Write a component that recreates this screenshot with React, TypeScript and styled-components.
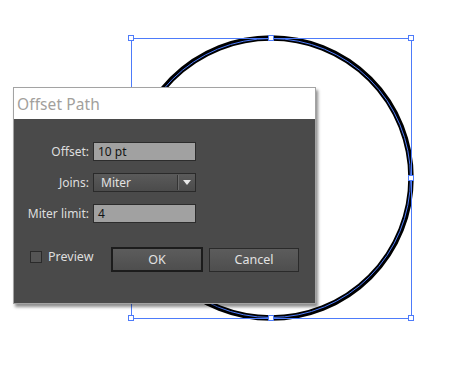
import React from "react";
import styled, { createGlobalStyle } from "styled-components";

const GlobalStyle = createGlobalStyle`
    html, body {
        margin: 0;
        padding: 0;
        background: #ffffff;
    }
    body {
        font-family: "Noto Sans", "DejaVu Sans", sans-serif;
    }
`;

const Canvas = styled.div`
    position: relative;
    width: 464px;
    height: 367px;
    overflow: hidden;
    background: #ffffff;
`;

const Artwork = styled.svg`
    position: absolute;
    left: 0;
    top: 0;
`;

const Dialog = styled.div`
    position: absolute;
    left: 13px;
    top: 87px;
    width: 301px;
    height: 215px;
    border: 1px solid #a3a3a3;
    background: #4a4a4a;
    box-shadow: 2px 3px 3px rgba(0, 0, 0, 0.45);
    display: flex;
    flex-direction: column;
`;

const TitleBar = styled.div`
    height: 31px;
    background: #ffffff;
    display: flex;
    align-items: center;
    padding-left: 3px;
    font-size: 15.5px;
    color: #a29f9c;
    letter-spacing: 0.1px;
`;

const Body = styled.div`
    flex: 1;
    padding-top: 23px;
    display: flex;
    flex-direction: column;
    gap: 24px;
`;

const Form = styled.div`
    display: grid;
    grid-template-columns: 75px 103px;
    column-gap: 4px;
    row-gap: 12px;
`;

const Label = styled.label`
    text-align: right;
    font-size: 12px;
    color: #dedede;
    line-height: 19px;
`;

const Field = styled.div`
    box-sizing: border-box;
    height: 19px;
    background: #a1a1a1;
    border: 1px solid #2c2c2c;
    padding-left: 4px;
    font-size: 12px;
    line-height: 17px;
    color: #141414;
`;

const Select = styled.div`
    box-sizing: border-box;
    height: 19px;
    border: 1px solid #2a2a2a;
    background: linear-gradient(#5a5a5a, #4b4b4b);
    display: flex;
    align-items: center;
    font-size: 12px;
    color: #e2e2e2;
`;

const SelectValue = styled.span`
    flex: 1;
    padding-left: 7px;
    line-height: 17px;
`;

const SelectArrow = styled.span`
    width: 17px;
    height: 15px;
    border-left: 1px solid #333333;
    box-shadow: inset 1px 0 0 #6a6a6a;
    display: flex;
    align-items: center;
    justify-content: center;

    &::after {
        content: "";
        border-left: 4px solid transparent;
        border-right: 4px solid transparent;
        border-top: 5px solid #e8e8e8;
    }
`;

const Actions = styled.div`
    display: flex;
    align-items: center;
    padding-left: 16px;
`;

const PreviewToggle = styled.label`
    width: 81px;
    display: flex;
    align-items: center;
    gap: 6px;
    font-size: 12.5px;
    color: #dedede;
    margin-top: -6px;
`;

const CheckBox = styled.span`
    box-sizing: border-box;
    width: 12px;
    height: 12px;
    border: 1px solid #2a2a2a;
    background: #555555;
`;

const Button = styled.button<{ $primary?: boolean }>`
    box-sizing: border-box;
    width: ${(p) => (p.$primary ? "92px" : "90px")};
    height: ${(p) => (p.$primary ? "25px" : "24px")};
    margin-right: 6px;
    border: ${(p) => (p.$primary ? "2px solid #1c1c1c" : "1px solid #2a2a2a")};
    background: linear-gradient(#5c5c5c, #4e4e4e);
    color: #e2e2e2;
    font-family: inherit;
    font-size: 12.5px;
    padding: 0;
`;

const blue = "#4d7bfa";

const handles: [number, number][] = [
    [131, 38],
    [271, 38],
    [411, 38],
    [411, 178],
    [411, 318],
    [271, 318],
    [131, 318],
    [131, 178],
];

const App: React.FC = () => {
    return (
        <Canvas>
            <GlobalStyle />
            <Artwork width={464} height={367} viewBox="0 0 464 367">
                <circle cx={271} cy={178} r={140} fill="none" stroke="#000" strokeWidth={5.5} />
                <circle cx={271} cy={178} r={139.5} fill="none" stroke={blue} strokeWidth={1} />
                <rect x={131.5} y={38.5} width={280} height={280} fill="none" stroke={blue} strokeWidth={1} />
                {handles.map(([x, y], i) => (
                    <rect key={i} x={x - 2.5} y={y - 2.5} width={5} height={5} fill="#fff" stroke={blue} strokeWidth={1} />
                ))}
            </Artwork>

            <Dialog>
                <TitleBar>Offset Path</TitleBar>
                <Body>
                    <Form>
                        <Label>Offset:</Label>
                        <Field>10 pt</Field>
                        <Label>Joins:</Label>
                        <Select>
                            <SelectValue>Miter</SelectValue>
                            <SelectArrow />
                        </Select>
                        <Label>Miter limit:</Label>
                        <Field>4</Field>
                    </Form>
                    <Actions>
                        <PreviewToggle>
                            <CheckBox />
                            Preview
                        </PreviewToggle>
                        <Button $primary>OK</Button>
                        <Button>Cancel</Button>
                    </Actions>
                </Body>
            </Dialog>
        </Canvas>
    );
};

export default App;
